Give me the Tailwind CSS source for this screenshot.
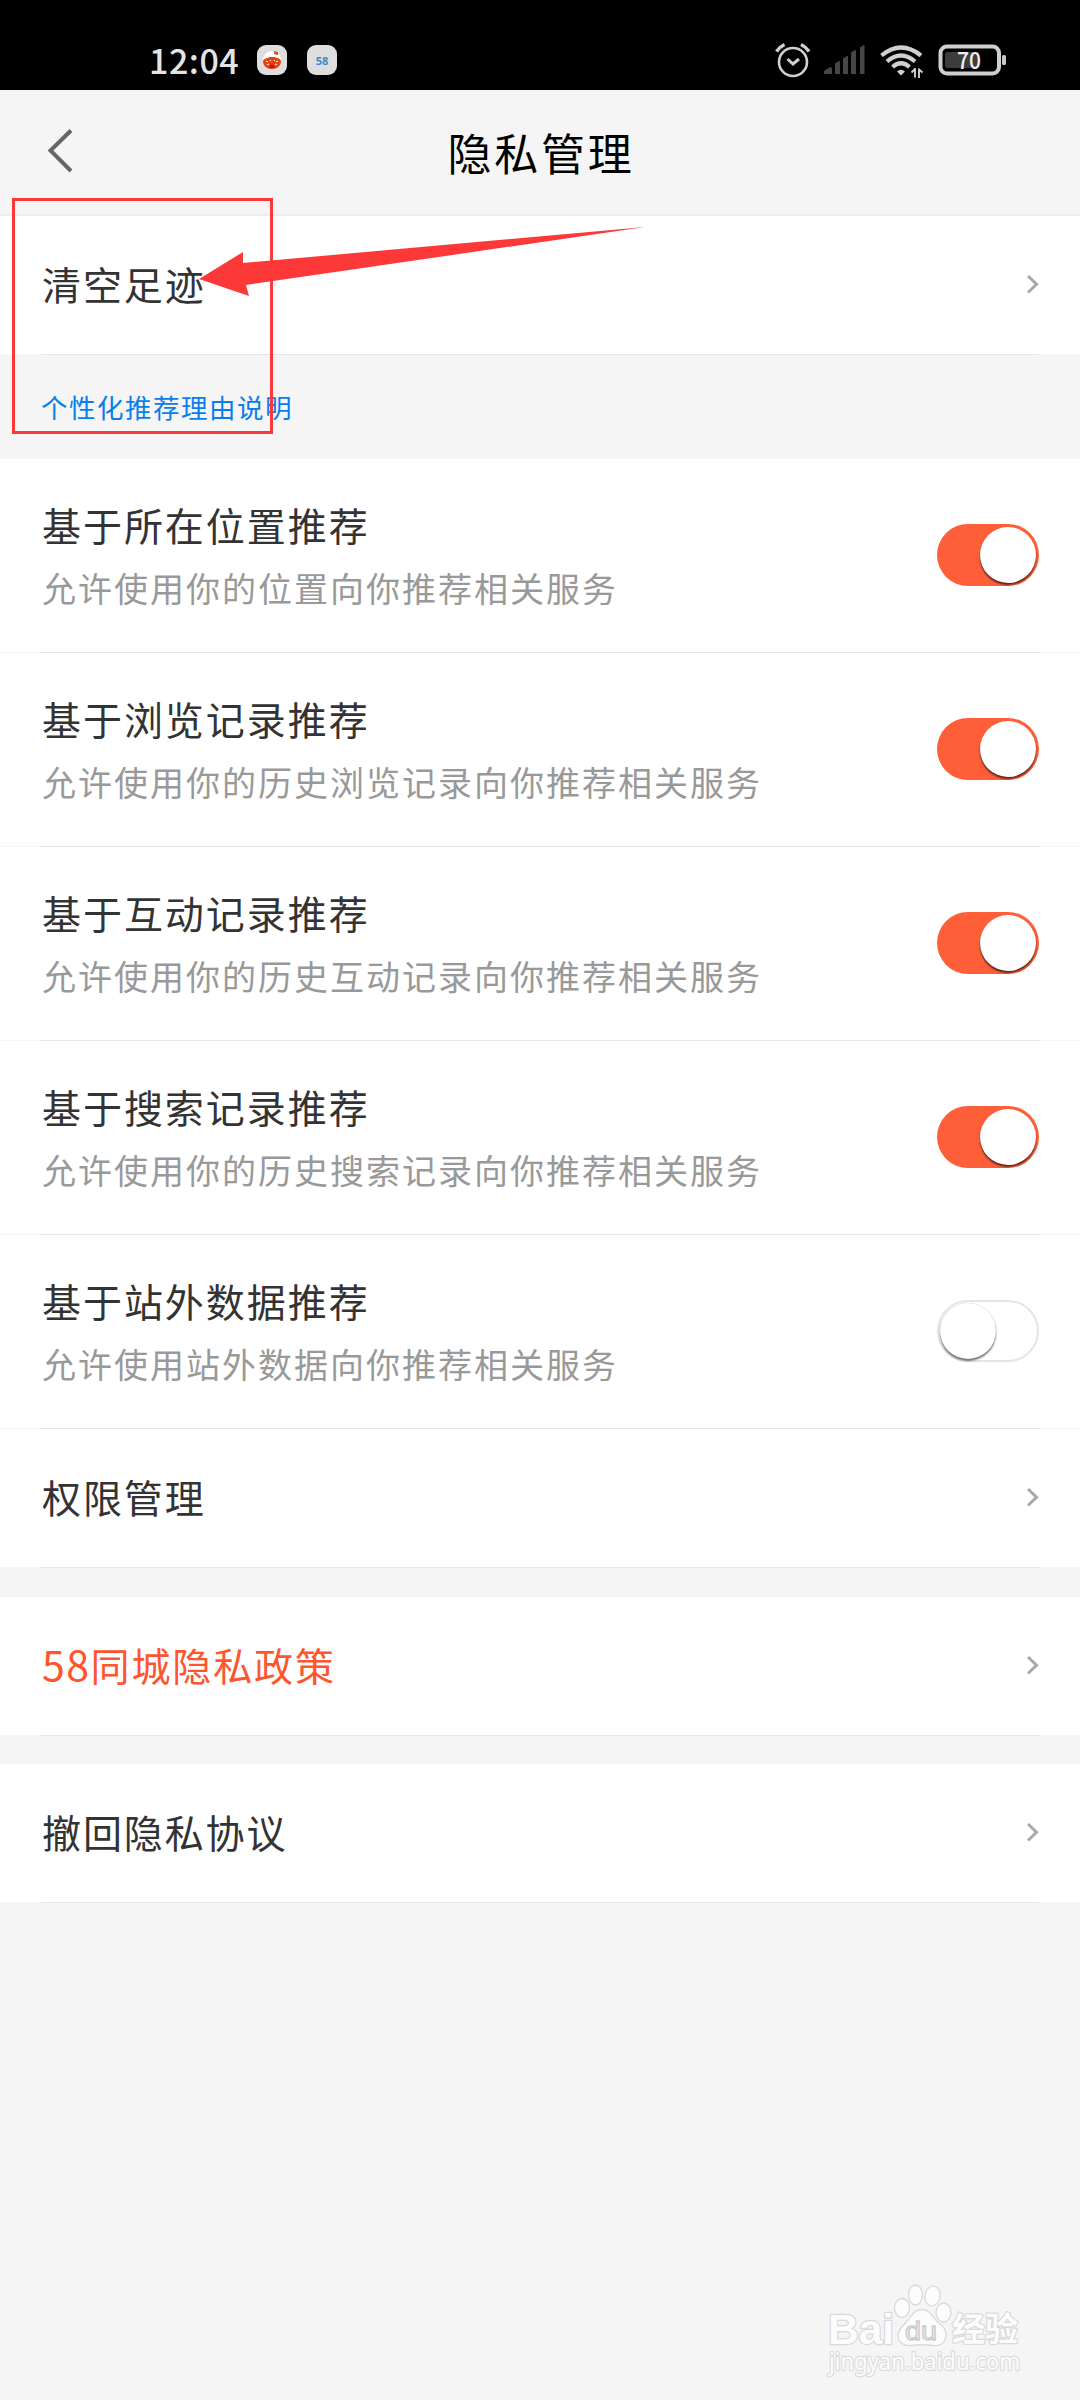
<!DOCTYPE html>
<html lang="zh-CN">
<head>
<meta charset="utf-8">
<title>隐私管理</title>
<script src="https://cdn.jsdelivr.net/npm/@tailwindcss/browser@4"></script>
</head>
<body class="relative w-[1080px] h-[2400px] overflow-hidden bg-[#f5f5f5] font-['Noto_Sans_CJK_SC',sans-serif] text-[#333333]">
<!-- Status bar -->
<div class="flex h-[90px] bg-black pl-[149px] pr-[74px] pt-[45px]">
  <div class="flex h-[30px] flex-1 items-center">
    <span class="w-[108px] whitespace-nowrap text-[34px] font-medium leading-[30px] tracking-[0.5px] text-[#e4e4e4]">12:04</span>
    <svg class="h-[30px] w-[30px]" viewBox="0 0 30 30"><rect width="30" height="30" rx="9" fill="#dedede"/><circle cx="15" cy="15" r="9" fill="#fff"/><path d="M17 6l4 1v3h-2l-1-1h-1z" fill="#e8512d"/><path d="M6 16c1-3 5-3 7-4h4c3 1 6 1 7 4 0 5-4 8-9 8s-9-3-9-8z" fill="#e9400f"/><path d="M9 16l2 1M10 20l2-1M13 15l1 1M18 15l-1 1M21 16l-2 1M20 20l-2-1" stroke="#fff" stroke-width="1"/><path d="M11 23l4-4 4 4z" fill="#cf1508"/></svg>
    <span class="ml-5 flex h-[30px] w-[30px] items-center justify-center rounded-[9px] bg-[#dedede] font-['Open_Sans',sans-serif] text-[11px] font-bold leading-none text-[#3f85cf]">58</span>
  </div>
  <div class="-mt-[3px] flex">
    <svg class="h-[40px] w-[232px]" viewBox="774 42 232 40" fill="none" stroke="#d0d0d0">
      <circle cx="793" cy="62" r="14" stroke-width="2.6"/>
      <path d="M776.500 51.500q3-4.500 8-7M809 51.500q-3-4.500-8-7" stroke-width="3.400"/>
      <path d="M787.500 59l5.500 5 6-5" stroke-width="3"/>
      <g fill="#464646" stroke="none"><path d="M824 74v-3l6-4 2 1v6zM835 74V63.500l4-2.500 1 .5V74zM843 74V58.500l4-2.500 1 .5V74zM851 74V52.500l4-2.500 1 .5V74zM860 74V47.500l4-2.500 .5 .5V74z"/></g>
      <path d="M881.500 55.500q19.500-16 39.500 0" stroke-width="4.200"/>
      <path d="M887 61.500q14-12 28 0" stroke-width="4.200"/>
      <path d="M892.500 67q8.500-7.500 17 0" stroke-width="4.200"/>
      <path d="M897 71.500q4-3.500 8 0l-4 4z" fill="#d0d0d0" stroke="none"/>
      <path d="M915 68v9.500M911.500 72.500l3.500-3.500M919 78v-9.500M922.500 72.500l-3.500-3" stroke-width="1.900"/>
      <rect x="940.500" y="46.500" width="58.500" height="27" rx="6.500" stroke-width="4"/>
      <rect x="945" y="52" width="34" height="16" rx="3" fill="#3c3c3c" stroke="none"/>
      <rect x="1002" y="55" width="4" height="10" rx="1.500" fill="#c8c8c8" stroke="none"/>
      <text x="969" y="69" text-anchor="middle" textLength="24" lengthAdjust="spacingAndGlyphs" fill="#eeeeee" stroke="none" class="text-[23px] font-medium">70</text>
    </svg>
  </div>
</div>
<!-- Title bar -->
<header class="relative flex h-[126px] items-center justify-center border-b-2 border-[#ededed]">
  <svg class="absolute left-[46px] top-[36px] h-[48px] w-[28px]" viewBox="0 0 28 48" fill="none"><path d="M25 4.500L4.500 24.500 25 45" stroke="#666666" stroke-width="4"/></svg>
  <h1 class="pl-[2px] text-[44px] leading-[60px] tracking-[2.7px] text-black">隐私管理</h1>
</header>

<main>
  <a class="flex h-[138px] items-center justify-between bg-white pb-[3px] pl-[42px] pr-[41px] text-[39px] tracking-[1.9px]">清空足迹<svg class="h-[20px] w-[12px]" viewBox="0 0 12 20" fill="none"><path d="M1 2L9.500 10.300 1 18.500" stroke="#a8a8a8" stroke-width="3"/></svg></a>
  <div class="mx-[41px] h-px bg-[#e6e6e6]"></div>
  <a class="flex h-[104px] items-center pl-[41px] text-[26.500px] tracking-[1.500px] text-[#0a7dec]">个性化推荐理由说明</a>

  <section>
    <div class="flex h-[193px] items-center justify-between bg-white pb-[3px] pl-[42px] pr-[41px]">
      <div class="mb-[2px]"><p class="text-[39px] leading-[60px] tracking-[1.950px]">基于所在位置推荐</p><p class="mt-[9px] text-[34px] leading-[50px] tracking-[2px] text-[#999999]">允许使用你的位置向你推荐相关服务</p></div>
      <div class="mt-[2px] flex h-[62px] w-[102px] justify-end rounded-full bg-[#ff5f38] p-[3px]"><span class="h-[56px] w-[56px] rounded-full bg-white shadow-[0_2px_2px_rgba(0,0,0,0.65)]"></span></div>
    </div>
    <div class="mx-[41px] h-px bg-[#e6e6e6]"></div>
    <div class="flex h-[193px] items-center justify-between bg-white pb-[3px] pl-[42px] pr-[41px]">
      <div class="mb-[2px]"><p class="text-[39px] leading-[60px] tracking-[1.950px]">基于浏览记录推荐</p><p class="mt-[9px] text-[34px] leading-[50px] tracking-[2px] text-[#999999]">允许使用你的历史浏览记录向你推荐相关服务</p></div>
      <div class="mt-[2px] flex h-[62px] w-[102px] justify-end rounded-full bg-[#ff5f38] p-[3px]"><span class="h-[56px] w-[56px] rounded-full bg-white shadow-[0_2px_2px_rgba(0,0,0,0.65)]"></span></div>
    </div>
    <div class="mx-[41px] h-px bg-[#e6e6e6]"></div>
    <div class="flex h-[193px] items-center justify-between bg-white pb-[3px] pl-[42px] pr-[41px]">
      <div class="mb-[2px]"><p class="text-[39px] leading-[60px] tracking-[1.950px]">基于互动记录推荐</p><p class="mt-[9px] text-[34px] leading-[50px] tracking-[2px] text-[#999999]">允许使用你的历史互动记录向你推荐相关服务</p></div>
      <div class="mt-[2px] flex h-[62px] w-[102px] justify-end rounded-full bg-[#ff5f38] p-[3px]"><span class="h-[56px] w-[56px] rounded-full bg-white shadow-[0_2px_2px_rgba(0,0,0,0.65)]"></span></div>
    </div>
    <div class="mx-[41px] h-px bg-[#e6e6e6]"></div>
    <div class="flex h-[193px] items-center justify-between bg-white pb-[3px] pl-[42px] pr-[41px]">
      <div class="mb-[2px]"><p class="text-[39px] leading-[60px] tracking-[1.950px]">基于搜索记录推荐</p><p class="mt-[9px] text-[34px] leading-[50px] tracking-[2px] text-[#999999]">允许使用你的历史搜索记录向你推荐相关服务</p></div>
      <div class="mt-[2px] flex h-[62px] w-[102px] justify-end rounded-full bg-[#ff5f38] p-[3px]"><span class="h-[56px] w-[56px] rounded-full bg-white shadow-[0_2px_2px_rgba(0,0,0,0.65)]"></span></div>
    </div>
    <div class="mx-[41px] h-px bg-[#e6e6e6]"></div>
    <div class="flex h-[193px] items-center justify-between bg-white pb-[3px] pl-[42px] pr-[41px]">
      <div class="mb-[2px]"><p class="text-[39px] leading-[60px] tracking-[1.950px]">基于站外数据推荐</p><p class="mt-[9px] text-[34px] leading-[50px] tracking-[2px] text-[#999999]">允许使用站外数据向你推荐相关服务</p></div>
      <div class="mt-[2px] flex h-[62px] w-[102px] rounded-full border-2 border-[#e5e5e5] bg-white p-px"><span class="h-[56px] w-[56px] rounded-full bg-white shadow-[0_2px_2px_rgba(0,0,0,0.55),0_0_1px_rgba(0,0,0,0.3)]"></span></div>
    </div>
    <div class="mx-[41px] h-px bg-[#e6e6e6]"></div>
  </section>

  <a class="flex h-[138px] items-center justify-between bg-white pb-[3px] pl-[42px] pr-[41px] text-[39px] tracking-[1.9px]">权限管理<svg class="h-[20px] w-[12px]" viewBox="0 0 12 20" fill="none"><path d="M1 2L9.500 10.300 1 18.500" stroke="#a8a8a8" stroke-width="3"/></svg></a>
  <div class="mx-[41px] mb-[29px] h-px bg-[#e6e6e6]"></div>
  <a class="flex h-[138px] items-center justify-between bg-white pb-[3px] pl-[42px] pr-[41px] text-[39px] tracking-[1.9px] text-[#ff552e]"><span><span class="text-[41px] leading-none tracking-[1.500px]">58</span>同城隐私政策</span><svg class="h-[20px] w-[12px]" viewBox="0 0 12 20" fill="none"><path d="M1 2L9.500 10.300 1 18.500" stroke="#a8a8a8" stroke-width="3"/></svg></a>
  <div class="mx-[41px] mb-[28px] h-px bg-[#e6e6e6]"></div>
  <a class="flex h-[138px] items-center justify-between bg-white pb-[3px] pl-[42px] pr-[41px] text-[39px] tracking-[1.9px]">撤回隐私协议<svg class="h-[20px] w-[12px]" viewBox="0 0 12 20" fill="none"><path d="M1 2L9.500 10.300 1 18.500" stroke="#a8a8a8" stroke-width="3"/></svg></a>
  <div class="mx-[41px] h-px bg-[#e6e6e6]"></div>
</main>

<!-- Highlight box and arrow over the first row -->
<div class="absolute left-[12px] top-[198px] h-[236px] w-[261px] border-[3px] border-[#fc3938]"></div>
<svg class="absolute left-[190px] top-[220px] h-[80px] w-[460px]" viewBox="190 220 460 80"><path d="M199 279L243 252V263L645 227 246 285 249 296z" fill="#fc3938"/></svg>

<!-- Watermark -->
<svg class="absolute left-[820px] top-[2276px] h-[110px] w-[210px]" viewBox="820 2276 210 110" fill="#fcfcfc" stroke="#d9d9d9" stroke-width="1.300">
  <g paint-order="stroke" stroke-width="2.400" stroke-linejoin="round" class="font-['Liberation_Sans',sans-serif] font-bold">
    <text x="828" y="2343.500" textLength="66" lengthAdjust="spacingAndGlyphs" class="text-[42px]">Bai</text>
    <text x="952" y="2341" textLength="66" lengthAdjust="spacingAndGlyphs" class="font-['Noto_Sans_CJK_SC',sans-serif] text-[33px] font-bold">经验</text>
    <text x="829" y="2370" textLength="191" lengthAdjust="spacingAndGlyphs" stroke="#dcdcdc" class="font-['Noto_Sans',sans-serif] text-[23px] font-normal">jingyan.baidu.com</text>
  </g>
  <ellipse cx="902" cy="2308" rx="7.500" ry="9.500"/>
  <ellipse cx="915.500" cy="2295" rx="7" ry="10"/>
  <ellipse cx="932.500" cy="2296" rx="7.500" ry="10" transform="rotate(10 932.500 2296)"/>
  <ellipse cx="943.500" cy="2312.500" rx="7.500" ry="9.500"/>
  <path d="M922 2309.500c9 0 10 8 16 13 6 4 9 8 8 14-1 7-7 10-13 9-7-1-14-1-21 0-8 1-14-3-14-10 0-6 4-9 8-13 6-6 7-13 16-13z"/>
  <text x="905" y="2340" textLength="32" lengthAdjust="spacingAndGlyphs" fill="#f2f2f2" stroke="#cccccc" class="font-['Liberation_Sans',sans-serif] text-[25px]">du</text>
</svg>
</body>
</html>
